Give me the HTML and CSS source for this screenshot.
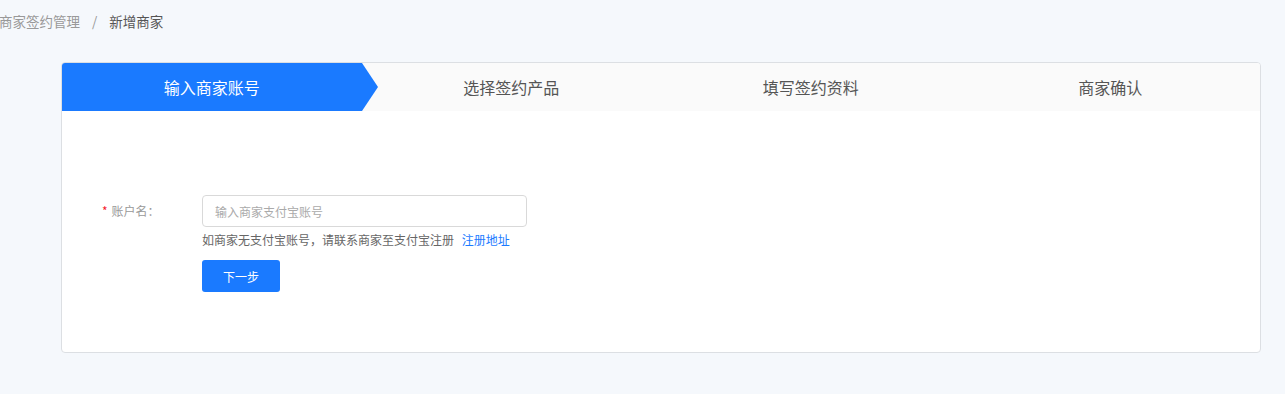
FILE: index.html
```html
<!DOCTYPE html>
<html lang="zh-CN">
<head>
    <meta charset="UTF-8">
    <title>新增商家</title>
    <link rel="stylesheet" href="styles.css">
</head>
<body>

    <div class="breadcrumb">
        <span class="crumb-link">商家签约管理</span>
        <span class="crumb-sep">/</span>
        <span class="crumb-current">新增商家</span>
    </div>

    <div class="card">
        <!-- 步骤条 -->
        <div class="steps">
            <div class="step active">输入商家账号</div>
            <div class="step">选择签约产品</div>
            <div class="step">填写签约资料</div>
            <div class="step">商家确认</div>
        </div>

        <div class="form">
            <div class="form-row">
                <label class="form-label"><span class="required">*</span>账户名：</label>
                <div class="form-field">
                    <input type="text" class="input" placeholder="输入商家支付宝账号">
                    <div class="help">如商家无支付宝账号，请联系商家至支付宝注册 <a href="#" class="link">注册地址</a></div>
                    <button class="button">下一步</button>
                </div>
            </div>
        </div>
    </div>

</body>
</html>
```

FILE: styles.css
```css
body {
    margin: 0;
    background-color: #f5f8fc;
    font-family: "Noto Sans CJK SC", "Microsoft YaHei", sans-serif;
    color: #333;
}

.breadcrumb {
    height: 42px;
    display: flex;
    align-items: center;
    font-size: 13.5px;
    margin-left: -1px;
}

.crumb-link {
    color: #999;
}

.crumb-sep {
    color: #999;
    margin: 0 12px;
}

.crumb-current {
    color: #555;
}

.card {
    margin: 20px 24px 0 61px;
    background: #fff;
    border: 1px solid #dcdfe3;
    border-radius: 4px;
    overflow: hidden;
}

/* 步骤条 */
.steps {
    display: flex;
    height: 48px;
    background: #fafafa;
}

.step {
    flex: 1;
    display: flex;
    align-items: center;
    justify-content: center;
    font-size: 16px;
    color: #555;
    position: relative;
}

.step.active {
    background: #1a7aff;
    color: #fff;
}

.step.active::after {
    content: "";
    position: absolute;
    right: -16px;
    top: 0;
    border-top: 24px solid transparent;
    border-bottom: 24px solid transparent;
    border-left: 16px solid #1a7aff;
}

.form {
    padding: 84px 40px 60px;
}

.form-row {
    display: flex;
}

.form-label {
    width: 100px;
    font-size: 12px;
    color: #999;
    line-height: 32px;
}

.required {
    color: #f5222d;
    margin-right: 4px;
}

.form-field {
    display: flex;
    flex-direction: column;
    align-items: flex-start;
}

.input {
    width: 325px;
    height: 32px;
    box-sizing: border-box;
    border: 1px solid #d9d9d9;
    border-radius: 4px;
    padding: 0 12px;
    font-size: 12px;
    font-family: inherit;
    outline: none;
}

.input::placeholder {
    color: #aaa;
}

.help {
    font-size: 12px;
    color: #666;
    line-height: 26px;
}

.link {
    color: #1a7aff;
    text-decoration: none;
    margin-left: 5px;
}

.button {
    margin-top: 7px;
    width: 78px;
    height: 32px;
    border: none;
    border-radius: 3px;
    background: #1a7aff;
    color: #fff;
    font-size: 12px;
    font-family: inherit;
    cursor: pointer;
}
```
